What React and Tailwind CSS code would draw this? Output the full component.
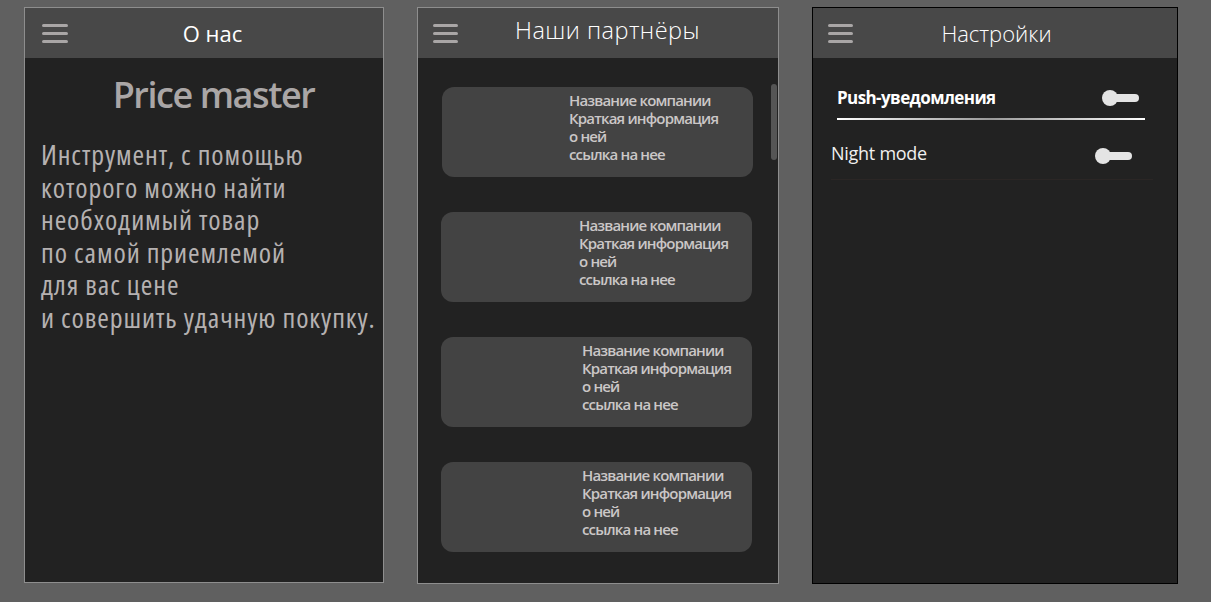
import React from 'react'

const Burger = ({ className = '' }) => (
  <div className={`flex flex-col gap-[5px] ${className}`}>
    <span className="block h-[3px] w-full rounded-full bg-[#a9a6a6]" />
    <span className="block h-[3px] w-full rounded-full bg-[#a9a6a6]" />
    <span className="block h-[3px] w-full rounded-full bg-[#a9a6a6]" />
  </div>
)

const Header = ({ title, burgerCls, titleCls, light }) => (
  <div className="flex h-[50px] shrink-0 items-center bg-[#484848]">
    <Burger className={burgerCls} />
    <div
      className={`flex-1 text-center leading-none text-white ${light ? 'font-light' : 'font-normal'} ${titleCls}`}
    >
      {title}
    </div>
  </div>
)

const Toggle = ({ className = '' }) => (
  <div className={`flex items-center ${className}`}>
    <span className="block h-[16px] w-[16px] rounded-full bg-[#e4e4e4]" />
    <span className="-ml-[3px] block h-[8px] w-[24px] rounded-r-full bg-[#e4e4e4]" />
  </div>
)

const aboutLines = [
  'Инструмент, с помощью',
  'которого можно найти',
  'необходимый товар',
  'по самой приемлемой',
  'для вас цене',
  'и совершить удачную покупку.',
]

const partners = [
  { mt: 'mt-[29px]', pl: 'pl-[127px]' },
  { mt: 'mt-[35px]', pl: 'pl-[138px]' },
  { mt: 'mt-[35px]', pl: 'pl-[141px]' },
  { mt: 'mt-[35px]', pl: 'pl-[141px]' },
]

const PartnerCard = ({ mt, pl, idx }) => (
  <div
    className={`${mt} ${idx === 0 ? 'ml-[24px]' : 'ml-[23px]'} h-[90px] w-[311px] rounded-[12px] bg-[#434343] ${pl} pt-[4px]`}
  >
    <div className="text-[15px] font-semibold leading-[18px] tracking-[-0.055em] text-[#cbc7c7]">
      <div>Название компании</div>
      <div>Краткая информация</div>
      <div>о ней</div>
      <div>ссылка на нее</div>
    </div>
  </div>
)

export default function App() {
  return (
    <div
      className="flex h-[602px] w-[1211px] items-start bg-[#606060]"
      style={{ fontFamily: '"Open Sans", "Noto Sans", sans-serif' }}
    >
      {/* About */}
      <div className="ml-[24px] mt-[7px] flex h-[576px] w-[360px] flex-col border border-[#8e8e8e] bg-[#222222]">
        <Header title="О нас" burgerCls="ml-[17px] w-[26px]" titleCls="pr-[26px] text-[22px]" />
        <div className="pt-[15px] text-center text-[36px] font-semibold leading-[44px] tracking-[-0.04em] text-[#aaa6a6]">
          <span className="pl-[19px]">Price master</span>
        </div>
        <div className="mt-[21px] pl-[16px] text-[28px] leading-[32.5px] tracking-[0.9px] font-stretch-[75%] text-[#b5b1b1]">
          {aboutLines.map((l) => (
            <div key={l} className="whitespace-nowrap">{l}</div>
          ))}
        </div>
      </div>

      {/* Partners */}
      <div className="ml-[33px] mt-[7px] flex h-[577px] w-[362px] flex-col border border-[#8e8e8e] bg-[#222222]">
        <Header
          title="Наши партнёры"
          burgerCls="ml-[15px] w-[25px]"
          titleCls="pr-[21px] pb-[5px] text-[23.5px] tracking-[0.02em]"
          light
        />
        <div className="relative flex-1 overflow-hidden">
          {partners.map((p, i) => (
            <PartnerCard key={i} idx={i} {...p} />
          ))}
          <div className="absolute right-[1px] top-[26px] h-[76px] w-[6px] rounded-full bg-[#555555]" />
        </div>
      </div>

      {/* Settings */}
      <div className="ml-[33px] mt-[7px] flex h-[577px] w-[366px] flex-col border border-black bg-[#222222]">
        <Header title="Настройки" burgerCls="ml-[15px] w-[25px]" titleCls="pr-[37px] text-[22px]" light />
        <div className="pl-[24px] pr-[31px] pt-[27px]">
          <div className="flex items-center justify-between">
            <span className="text-[17px] font-bold leading-[26px] tracking-[-0.035em] text-white">Push-уведомления</span>
            <Toggle className="mr-[7px]" />
          </div>
          <div className="mt-[7px] h-[2px] w-[308px] bg-gradient-to-r from-white via-[#9a9a9a] to-white" />
        </div>
        <div className="pl-[18px] pt-[20px]">
          <div className="flex w-[301px] items-center justify-between">
            <span className="text-[18px] leading-[26px] tracking-[-0.015em] text-[#f0f0f0]">Night mode</span>
            <Toggle className="mt-[6px]" />
          </div>
          <div className="mt-[13px] h-[1px] w-[322px] bg-[#2b2625]" />
        </div>
      </div>
    </div>
  )
}
